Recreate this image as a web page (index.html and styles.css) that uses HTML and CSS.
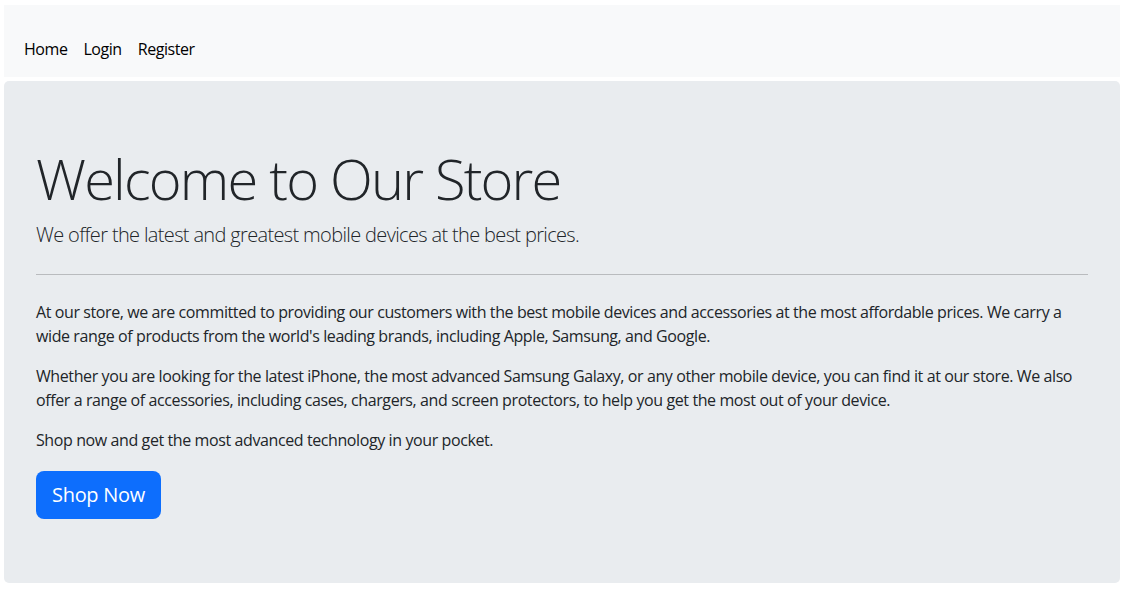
FILE: index.html
```html
<!DOCTYPE html>
<html lang="en">
<head>
<meta charset="utf-8">
<title>Our Store</title>
<link rel="stylesheet" href="styles.css">
</head>
<body>
<div class="page">
  <nav class="navbar">
    <ul class="nav">
      <li><a class="nav-link" href="#">Home</a></li>
      <li><a class="nav-link" href="#">Login</a></li>
      <li><a class="nav-link" href="#">Register</a></li>
    </ul>
  </nav>
  <main class="jumbotron">
    <h1 class="display">Welcome to Our Store</h1>
    <p class="lead">We offer the latest and greatest mobile devices at the best prices.</p>
    <hr class="divider">
    <p class="text">At our store, we are committed to providing our customers with the best mobile devices and accessories at the most affordable prices. We carry a wide range of products from the world's leading brands, including Apple, Samsung, and Google.</p>
    <p class="text">Whether you are looking for the latest iPhone, the most advanced Samsung Galaxy, or any other mobile device, you can find it at our store. We also offer a range of accessories, including cases, chargers, and screen protectors, to help you get the most out of your device.</p>
    <p class="text">Shop now and get the most advanced technology in your pocket.</p>
    <a class="btn" href="#">Shop Now</a>
  </main>
</div>
</body>
</html>
```
FILE: styles.css
```css
* { box-sizing: border-box; }
html, body { margin: 0; padding: 0; background: #fff; }
body {
  font-family: "Open Sans", "Noto Sans", sans-serif;
  font-size: 16px;
  line-height: 24px;
  color: #212529;
}
.page {
  display: flex;
  flex-direction: column;
  gap: 4px;
  padding: 5px 10px 0 4px;
}
.navbar {
  background: #f8f9fa;
  padding: 24px 12px 8px;
}
.nav {
  list-style: none;
  margin: 0;
  padding: 0;
  display: flex;
}
.nav-link {
  display: block;
  padding: 8px;
  color: #000;
  text-decoration: none;
  letter-spacing: -0.45px;
}
.jumbotron {
  background: #e9ecef;
  border-radius: 5px;
  padding: 64px 32px;
  display: flex;
  flex-direction: column;
  align-items: flex-start;
}
.display {
  margin: 0 0 8px;
  font-size: 56px;
  font-weight: 300;
  line-height: 67px;
  letter-spacing: -1.8px;
}
.lead {
  margin: 0 0 24px;
  font-size: 20px;
  font-weight: 300;
  line-height: 30px;
  letter-spacing: -0.65px;
}
.divider {
  align-self: stretch;
  margin: 0 0 25px;
  border: 0;
  border-top: 1px solid #b9bbbe;
}
.text {
  margin: 0 0 16px;
  letter-spacing: -0.4px;
}
.btn {
  display: inline-block;
  margin-top: 3px;
  background: #0d6efd;
  color: #fff;
  text-decoration: none;
  font-size: 20px;
  line-height: 30px;
  padding: 9px 16px;
  border-radius: 8px;
  letter-spacing: -0.3px;
}
```
